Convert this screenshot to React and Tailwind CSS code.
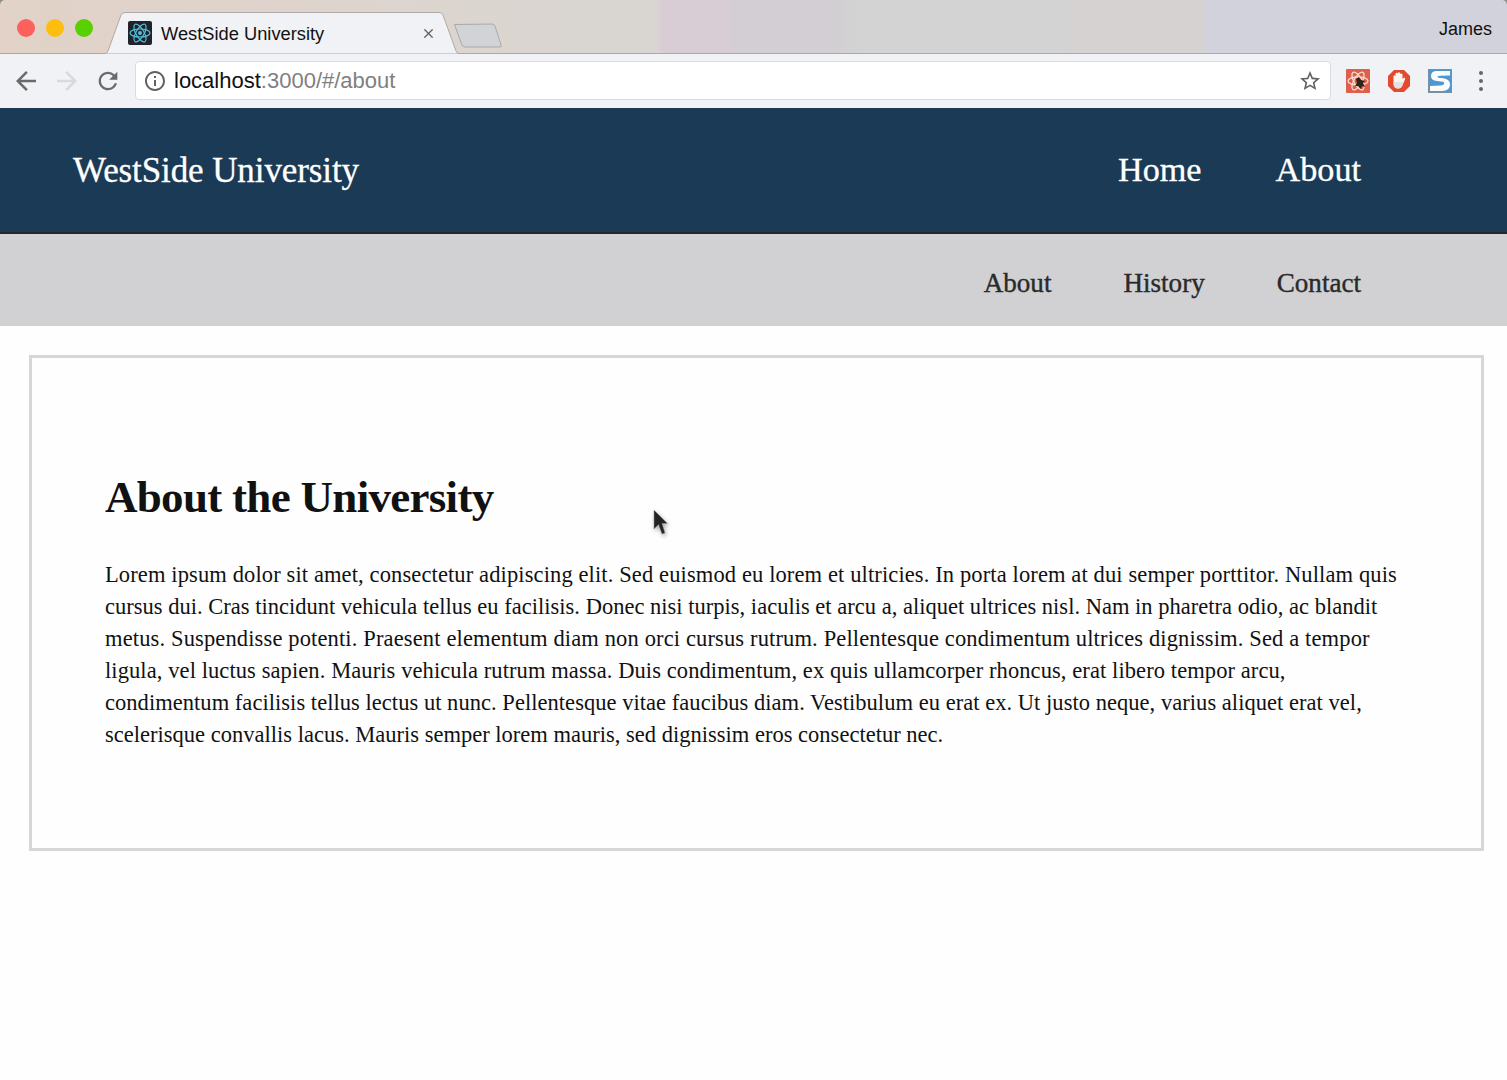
import { X } from 'lucide-react';

const lines = [
  { text: 'Lorem ipsum dolor sit amet, consectetur adipiscing elit. Sed euismod eu lorem et ultricies. In porta lorem at dui semper porttitor. Nullam quis', track: 'tracking-[0.12px]' },
  { text: 'cursus dui. Cras tincidunt vehicula tellus eu facilisis. Donec nisi turpis, iaculis et arcu a, aliquet ultrices nisl. Nam in pharetra odio, ac blandit', track: 'tracking-[0.013px]' },
  { text: 'metus. Suspendisse potenti. Praesent elementum diam non orci cursus rutrum. Pellentesque condimentum ultrices dignissim. Sed a tempor', track: 'tracking-[0.14px]' },
  { text: 'ligula, vel luctus sapien. Mauris vehicula rutrum massa. Duis condimentum, ex quis ullamcorper rhoncus, erat libero tempor arcu,', track: 'tracking-[0.09px]' },
  { text: 'condimentum facilisis tellus lectus ut nunc. Pellentesque vitae faucibus diam. Vestibulum eu erat ex. Ut justo neque, varius aliquet erat vel,', track: 'tracking-[0.04px]' },
  { text: 'scelerisque convallis lacus. Mauris semper lorem mauris, sed dignissim eros consectetur nec.', track: 'tracking-[0.01px]' },
];

const Glyph = ({ d, size, className }) => (
  <svg viewBox="0 0 24 24" width={size} height={size} className={className} fill="currentColor">
    <path d={d} />
  </svg>
);

const BACK = 'M20 11H7.83l5.59-5.59L12 4l-8 8 8 8 1.41-1.41L7.83 13H20v-2z';
const FORWARD = 'M12 4l-1.41 1.41L16.17 11H4v2h12.17l-5.58 5.59L12 20l8-8z';
const RELOAD = 'M17.65 6.35A7.958 7.958 0 0 0 12 4c-4.42 0-7.99 3.58-7.99 8s3.57 8 7.99 8c3.73 0 6.84-2.55 7.73-6h-2.08A5.99 5.99 0 0 1 12 18c-3.31 0-6-2.69-6-6s2.69-6 6-6c1.66 0 3.14.69 4.22 1.78L13 11h7V4l-2.35 2.35z';
const INFO = 'M11 17h2v-6h-2v6zm1-15C6.48 2 2 6.48 2 12s4.48 10 10 10 10-4.48 10-10S17.52 2 12 2zm0 18c-4.41 0-8-3.59-8-8s3.59-8 8-8 8 3.59 8 8-3.59 8-8 8zm-1-11h2V7h-2v2z';
const STAR = 'M22 9.24l-7.19-.62L12 2 9.19 8.63 2 9.24l5.46 4.73L5.82 21 12 17.27 18.18 21l-1.63-7.03L22 9.24zM12 15.4l-3.76 2.27 1-4.28-3.32-2.88 4.38-.38L12 6.1l1.71 4.04 4.38.38-3.32 2.88 1 4.28L12 15.4z';

const ReactLogo = () => (
  <svg viewBox="0 0 24 24" className="w-6 h-6 rounded-[2px] bg-[#20232a]">
    <circle cx="12" cy="12" r="2" fill="#53c1de" />
    <g fill="none" stroke="#53c1de" strokeWidth="1.2">
      <ellipse cx="12" cy="12" rx="10" ry="4" />
      <ellipse cx="12" cy="12" rx="10" ry="4" transform="rotate(60 12 12)" />
      <ellipse cx="12" cy="12" rx="10" ry="4" transform="rotate(120 12 12)" />
    </g>
  </svg>
);

const TabShape = () => (
  <svg className="absolute left-0 top-0 w-[358px] h-[42px]" viewBox="0 0 358 42">
    <path d="M0 41.5 L2 41.5 Q4 41.5 5 39 L18 3 Q19 0.5 22 0.5 L336 0.5 Q339 0.5 340 3 L353 39 Q354 41.5 356 41.5 L358 41.5 L358 42 L0 42 Z" fill="#f1f2f5" stroke="#aeaaa8" strokeWidth="1" />
  </svg>
);

const ExtensionIcons = () => (
  <div className="flex items-center gap-[17px]">
    <svg viewBox="0 0 24 24" className="w-6 h-6">
      <rect width="24" height="24" rx="1" fill="#dd5f4c" />
      <g fill="none" stroke="#f8dcd4" strokeWidth="1.3">
        <ellipse cx="12" cy="12" rx="10" ry="4" />
        <ellipse cx="12" cy="12" rx="10" ry="4" transform="rotate(60 12 12)" />
        <ellipse cx="12" cy="12" rx="10" ry="4" transform="rotate(120 12 12)" />
      </g>
      <path d="M10 10 L13 8 L15 11 L19 12 L17 14 L19 18 L16 17 L15 20 L12 17 L9 17 L11 14 Z" fill="#2f2418" />
    </svg>
    <svg viewBox="0 0 24 24" className="w-6 h-6">
      <path d="M7 1 H17 L23 7 V17 L17 23 H7 L1 17 V7 Z" fill="#e2492f" />
      <path d="M6.5 12 V7 Q7.5 5.5 8.5 7 V4.5 Q9.5 3 10.8 4.5 V3.8 Q12 2.6 13.2 3.8 V5 Q14.5 3.8 15.5 5.5 V10 L17 8.5 Q18.8 8.5 18 10.5 L15.5 16 Q14.5 19.5 11 19.5 Q7 19.5 6.5 15 Z" fill="#fbf5f2" />
      <path d="M6.5 13 H16.8 L15.5 16 Q14.5 19.5 11 19.5 Q7 19.5 6.5 15 Z" fill="#e4e1df" />
    </svg>
    <svg viewBox="0 0 24 24" className="w-6 h-6">
      <rect x="0.5" y="0.5" width="23" height="23" fill="#4f97d0" stroke="#7a8fa3" />
      <path d="M22 2 H9 Q3 2 3 7 Q3 11.5 9 12 L15 12.8 Q17 13.2 16 15 Q15 16.5 12 16.5 L2 17 V22 H14 Q22 22 22 15.5 Q22 10 15 9.2 L10.5 8.7 Q9 8.2 9.8 7.3 Q10.5 6.8 12 6.8 L22 6.5 Z" fill="#fdfdfd" />
    </svg>
  </div>
);

const BrowserChrome = () => (
  <div className="bg-[#8d8d8d] font-['Liberation_Sans',sans-serif]">
    <div className="relative h-[54px] rounded-t-[5px] border-b border-[#a9a9ab] bg-[linear-gradient(90deg,#e2d2c8_0%,#dcd5cf_30%,#d8d5d2_43.6%,#d9ccd4_44%,#d8cdd4_48.4%,#d2ced4_48.6%,#d2ced4_55%,#d2d3d2_57%,#d2d3d2_70.9%,#d6d2d2_71%,#d6d2d2_79.8%,#d1d2db_80%,#d1d2dc_100%)]">
      <div className="flex items-center gap-[11px] pl-[17px] pt-[19px]">
        <span className="w-[18px] h-[18px] rounded-full bg-[#fc615d]" />
        <span className="w-[18px] h-[18px] rounded-full bg-[#fdbe0f]" />
        <span className="w-[18px] h-[18px] rounded-full bg-[#59d001]" />
      </div>
      <div className="absolute left-[103px] top-[12px] w-[358px] h-[42px]">
        <TabShape />
        <div className="relative flex items-center h-full pl-[25px] pr-[25px]">
          <ReactLogo />
          <span className="ml-[9px] pt-[2px] text-[18.3px] text-[#111] flex-1">WestSide University</span>
          <X size={15} strokeWidth={2} className="text-[#5f5f5f]" />
        </div>
      </div>
      <svg className="absolute left-[453px] top-[23px] w-[50px] h-[25px]" viewBox="0 0 50 25">
        <path d="M2 1.5 Q1 1 2 3 L9 22 Q10 24 12 24 L47 24 Q49 24 48 22 L42 3 Q41 1 39 1 Z" fill="#d2d3d7" stroke="#a9a9ab" />
      </svg>
      <span className="absolute right-[15px] top-[16px] text-[18px] text-[#111]">James</span>
    </div>
    <div className="flex items-center h-[54px] bg-[#f1f2f5]">
      <div className="flex items-center w-[135px] pl-[11px]">
        <Glyph d={BACK} size={30} className="text-[#6a6a6a]" />
        <Glyph d={FORWARD} size={30} className="ml-[11px] text-[#d9d9db]" />
        <Glyph d={RELOAD} size={28} className="ml-[12px] text-[#6a6a6a]" />
      </div>
      <div className="flex items-center w-[1196px] h-[39px] mb-[1px] bg-white rounded-[4px] border border-[#dcdcde] pl-[7px] pr-[8px]">
        <Glyph d={INFO} size={24} className="text-[#616161]" />
        <span className="ml-[7px] text-[22px] text-[#111] flex-1">
          localhost<span className="text-[#808080]">:3000/#/about</span>
        </span>
        <Glyph d={STAR} size={24} className="text-[#616161]" />
      </div>
      <div className="ml-[15px]">
        <ExtensionIcons />
      </div>
      <div className="ml-[27px] flex flex-col gap-[4px]">
        <span className="w-1 h-1 rounded-full bg-[#666]" />
        <span className="w-1 h-1 rounded-full bg-[#666]" />
        <span className="w-1 h-1 rounded-full bg-[#666]" />
      </div>
    </div>
  </div>
);

const Cursor = () => (
  <svg className="absolute left-[653px] top-[509px] w-[17px] h-[28px] drop-shadow-[1px_2px_2px_rgba(0,0,0,0.35)]" viewBox="0 0 17 28">
    <path d="M1 1 V20 L5.5 15.5 L9 25 L12 24 L9 14.5 L14.5 14.5 Z" fill="#222" stroke="#999" strokeWidth="0.5" />
  </svg>
);

export default function App() {
  return (
    <div className="relative min-h-[1080px] bg-[#fefefe] overflow-hidden font-['Liberation_Serif',serif]">
      <BrowserChrome />

      <header className="flex items-center justify-between h-[126px] bg-[#1b3a55] border-b-2 border-[#23282d] pl-[73px] pr-[146px] text-white [-webkit-text-stroke:0.3px]">
        <span className="text-[35px] tracking-[-0.1px] pt-[2px]">WestSide University</span>
        <nav className="flex gap-[74px] text-[34.2px]">
          <a>Home</a>
          <a>About</a>
        </nav>
      </header>

      <nav className="flex items-center justify-end gap-[72px] h-[92px] pt-[6px] bg-[#d1d1d3] pr-[146px] text-[27.1px] text-[#2a2a2a] [-webkit-text-stroke:0.4px]">
        <a>About</a>
        <a>History</a>
        <a>Contact</a>
      </nav>

      <main className="pt-[29px] pl-[29px] pr-[23px]">
        <div className="h-[496px] border-[3px] border-[#d6d6d6] pl-[73px] pt-[109px]">
          <h1 className="text-[45px] leading-[60px] font-bold tracking-[-0.7px] text-[#111]">About the University</h1>
          <div className="mt-[32px] text-[22.5px] leading-[32px] text-[#111] whitespace-nowrap">
            {lines.map((l) => (
              <p key={l.text} className={l.track}>{l.text}</p>
            ))}
          </div>
        </div>
      </main>

      <Cursor />
    </div>
  );
}
